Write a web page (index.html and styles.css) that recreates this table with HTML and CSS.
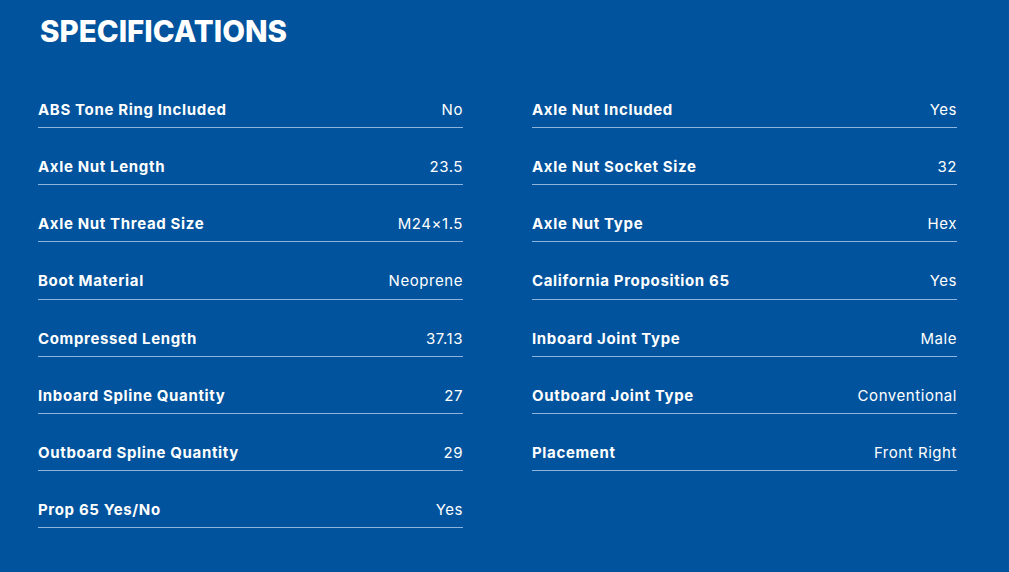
FILE: index.html
```html
<!DOCTYPE html>
<html lang="en">
<head>
<meta charset="utf-8">
<title>Specifications</title>
<link rel="stylesheet" href="styles.css">
</head>
<body>
<section class="specs">
  <h2 class="specs-title">SPECIFICATIONS</h2>
  <div class="specs-grid">
    <div class="spec-row"><span class="spec-label">ABS Tone Ring Included</span><span class="spec-value">No</span></div>
    <div class="spec-row"><span class="spec-label">Axle Nut Included</span><span class="spec-value">Yes</span></div>
    <div class="spec-row"><span class="spec-label">Axle Nut Length</span><span class="spec-value">23.5</span></div>
    <div class="spec-row"><span class="spec-label">Axle Nut Socket Size</span><span class="spec-value">32</span></div>
    <div class="spec-row"><span class="spec-label">Axle Nut Thread Size</span><span class="spec-value">M24×1.5</span></div>
    <div class="spec-row"><span class="spec-label">Axle Nut Type</span><span class="spec-value">Hex</span></div>
    <div class="spec-row"><span class="spec-label">Boot Material</span><span class="spec-value">Neoprene</span></div>
    <div class="spec-row"><span class="spec-label">California Proposition 65</span><span class="spec-value">Yes</span></div>
    <div class="spec-row"><span class="spec-label">Compressed Length</span><span class="spec-value">37.13</span></div>
    <div class="spec-row"><span class="spec-label">Inboard Joint Type</span><span class="spec-value">Male</span></div>
    <div class="spec-row"><span class="spec-label">Inboard Spline Quantity</span><span class="spec-value">27</span></div>
    <div class="spec-row"><span class="spec-label">Outboard Joint Type</span><span class="spec-value">Conventional</span></div>
    <div class="spec-row"><span class="spec-label">Outboard Spline Quantity</span><span class="spec-value">29</span></div>
    <div class="spec-row"><span class="spec-label">Placement</span><span class="spec-value">Front Right</span></div>
    <div class="spec-row"><span class="spec-label">Prop 65 Yes/No</span><span class="spec-value">Yes</span></div>
  </div>
</section>
</body>
</html>
```

FILE: styles.css
```css
html, body {
  margin: 0;
  padding: 0;
  background: #01539d;
}
body {
  font-family: "Inter", "Liberation Sans", sans-serif;
  color: #ffffff;
  width: 1009px;
  height: 572px;
  overflow: hidden;
}
.specs {
  padding: 11px 0 0 38px;
}
.specs-title {
  margin: 0 0 0 2px;
  font-size: 29.5px;
  line-height: 40px;
  font-weight: 800;
  letter-spacing: 0;
}
.specs-grid {
  margin-top: 20px;
  display: grid;
  grid-template-columns: 425px 425px;
  column-gap: 69px;
}
.spec-row {
  display: flex;
  justify-content: space-between;
  align-items: center;
  height: 20.14px;
  padding: 29px 0 7px;
  border-bottom: 1px solid #8db4dd;
  font-size: 15px;
  line-height: 20px;
}
.spec-label {
  font-weight: 700;
  letter-spacing: 0.65px;
}
.spec-value {
  font-weight: 400;
  letter-spacing: 0.55px;
}
```
